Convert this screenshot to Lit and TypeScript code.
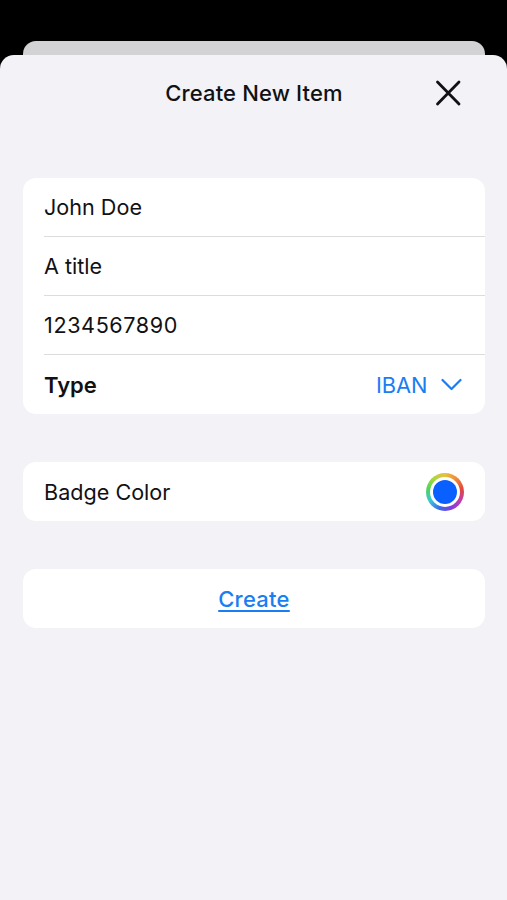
import { LitElement, html, css } from "lit";
import { customElement } from "lit/decorators.js";

@customElement("app-root")
export class AppRoot extends LitElement {
  static styles = css`
    :host {
      display: block;
      width: 507px;
      height: 900px;
      background: #000;
      overflow: hidden;
      font-family: Inter, "Liberation Sans", sans-serif;
      color: #111113;
    }
    .screen {
      height: 900px;
      padding-top: 41px;
      box-sizing: border-box;
      display: flex;
      flex-direction: column;
    }
    .back {
      height: 14px;
      flex: none;
      margin: 0 22px 0 23px;
      background: #d3d3d6;
      border-radius: 13px 13px 0 0;
    }
    .sheet {
      flex: 1;
      background: #f2f2f7;
      border-radius: 14px 14px 0 0;
      padding: 0 22px 0 23px;
      display: flex;
      flex-direction: column;
    }
    .header {
      height: 76px;
      flex: none;
      display: grid;
      grid-template-columns: 1fr auto 1fr;
      align-items: center;
      margin-bottom: 47px;
    }
    .title {
      grid-column: 2;
      font-size: 22px;
      font-weight: 550;
      letter-spacing: 0.15px;
    }
    .close {
      grid-column: 3;
      justify-self: end;
      display: flex;
      margin-right: 24px;
    }
    .card {
      background: #fff;
      border-radius: 13px;
      margin-bottom: 48px;
      flex: none;
    }
    .row {
      height: 59px;
      margin-left: 21px;
      padding-right: 22px;
      display: flex;
      align-items: center;
      justify-content: space-between;
      font-size: 21.6px;
      box-sizing: border-box;
    }
    .row:not(:last-child) {
      border-bottom: 1px solid #dcdcde;
    }
    .digits {
      letter-spacing: 0.6px;
    }
    .bold {
      font-weight: 600;
      font-size: 22px;
    }
    .picker {
      display: flex;
      align-items: center;
      gap: 13px;
      color: #1a7df2;
      font-size: 21.8px;
      margin-right: 1.5px;
    }
    .picker svg {
      display: block;
    }
    .wheel {
      width: 38px;
      height: 38px;
      border-radius: 50%;
      background: conic-gradient(#e8c040, #f08a3a, #e0483c, #c03ab0, #7c3fe0, #3a6ce8, #3ac6d8, #4fd45a, #a8d840, #e8c040);
      display: flex;
      align-items: center;
      justify-content: center;
      margin-right: -1px;
    }
    .wheel-in {
      width: 30px;
      height: 30px;
      border-radius: 50%;
      background: #fff;
      display: flex;
      align-items: center;
      justify-content: center;
    }
    .dot {
      width: 24px;
      height: 24px;
      border-radius: 50%;
      background: #0a60ff;
    }
    .action {
      height: 59px;
      display: flex;
      align-items: center;
      justify-content: center;
      color: #1a7df2;
      font-size: 22px;
      font-weight: 550;
      letter-spacing: 0.25px;
      text-decoration: underline;
      text-underline-offset: 3px;
      text-decoration-thickness: 2px;
    }
  `;

  render() {
    return html`
      <div class="screen">
        <div class="back"></div>
        <div class="sheet">
          <div class="header">
            <div class="title">Create New Item</div>
            <div class="close">
              <svg width="26" height="26" viewBox="0 0 26 26" fill="none" stroke="#111113" stroke-width="2.8" stroke-linecap="round">
                <path d="M2.5 2 L24 24 M24 2 L2.5 24" />
              </svg>
            </div>
          </div>
          <div class="card">
            <div class="row">John Doe</div>
            <div class="row">A title</div>
            <div class="row digits">1234567890</div>
            <div class="row">
              <span class="bold">Type</span>
              <span class="picker">
                IBAN
                <svg width="21" height="13" viewBox="0 0 21 13" fill="none" stroke="#1a7df2" stroke-width="2.2" stroke-linecap="round" stroke-linejoin="round">
                  <path d="M1.5 2 L10.5 11 L19.5 2" />
                </svg>
              </span>
            </div>
          </div>
          <div class="card">
            <div class="row">
              Badge Color
              <div class="wheel"><div class="wheel-in"><div class="dot"></div></div></div>
            </div>
          </div>
          <div class="card">
            <div class="action">Create</div>
          </div>
        </div>
      </div>
    `;
  }
}
